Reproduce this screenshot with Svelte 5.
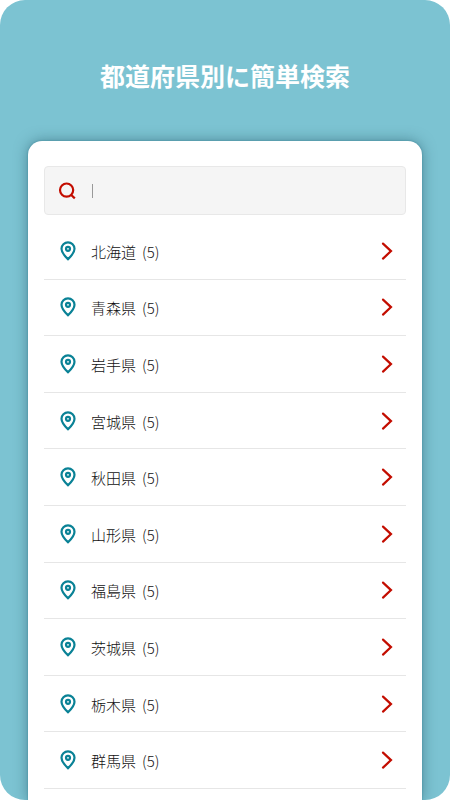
<script>
  const prefectures = [
    { name: '北海道', count: 5 },
    { name: '青森県', count: 5 },
    { name: '岩手県', count: 5 },
    { name: '宮城県', count: 5 },
    { name: '秋田県', count: 5 },
    { name: '山形県', count: 5 },
    { name: '福島県', count: 5 },
    { name: '茨城県', count: 5 },
    { name: '栃木県', count: 5 },
    { name: '群馬県', count: 5 },
  ];

  let query = $state('');
  const shown = $derived(prefectures.filter((p) => p.name.includes(query.trim())));
</script>

<main class="screen">
  <h1>都道府県別に簡単検索</h1>

  <section class="card">
    <label class="search">
      <svg class="icon" viewBox="0 0 20 20" aria-hidden="true">
        <circle cx="9.6" cy="9.1" r="6.6" />
        <path d="M14 13.8 17.8 17.4" />
      </svg>
      {#if !query}<span class="caret"></span>{/if}
      <input type="text" aria-label="都道府県" bind:value={query} />
    </label>

    <ul class="list">
      {#each shown as p (p.name)}
        <li>
          <a href="#{p.name}">
            <svg class="icon pin" viewBox="0 0 20 20" aria-hidden="true">
              <path d="M10 18.2C7.6 15.9 3.5 12 3.5 7.7a6.5 6.3 0 0 1 13 0C16.5 12 12.4 15.9 10 18.2Z" />
              <circle cx="10" cy="7.8" r="2" />
            </svg>
            <span class="label"><span>{p.name}</span><span>({p.count})</span></span>
            <svg class="icon arrow" viewBox="0 0 20 20" aria-hidden="true">
              <path d="M6 2.6 14 10.1 6 17.6" />
            </svg>
          </a>
        </li>
      {/each}
    </ul>
  </section>
</main>

<style>
  :global(body) {
    margin: 0;
    background: #fff;
  }

  .screen {
    box-sizing: border-box;
    height: 100vh;
    padding: 0 28px;
    display: flex;
    flex-direction: column;
    overflow: hidden;
    border-radius: 25px;
    background: #7cc3d2;
    font-family: 'Noto Sans CJK JP', 'Noto Sans', sans-serif;
  }

  h1 {
    margin: 0;
    padding: 55px 0 46px;
    color: #fff;
    font-size: 25px;
    font-weight: 700;
    line-height: 40px;
    text-align: center;
  }

  .card {
    flex: 1 0 auto;
    padding: 25px 16px 12px;
    border-radius: 14px 14px 0 0;
    background: #fff;
    box-shadow:
      0 0 2px #3f8ca0,
      0 0 14px rgba(30, 75, 90, 0.5);
  }

  .search {
    box-sizing: border-box;
    height: 49px;
    padding: 0 12px;
    display: flex;
    align-items: center;
    border: 1px solid #e8e8e8;
    border-radius: 4px;
    background: #f5f5f5;
  }

  .icon {
    flex: none;
    width: 20px;
    height: 20px;
    fill: none;
    stroke: #c30d00;
    stroke-width: 2.2;
  }

  .caret {
    width: 1px;
    height: 14px;
    margin-left: 15px;
    background: #999;
  }

  input {
    flex: 1;
    min-width: 0;
    margin-left: 14px;
    padding: 0;
    border: 0;
    outline: 0;
    background: transparent;
    color: #333;
    font: inherit;
    font-size: 15px;
  }

  .list {
    min-height: 566px;
    margin: 8px 0 0;
    padding: 0;
    display: grid;
    grid-template-rows: repeat(10, 1fr);
    list-style: none;
  }

  li {
    display: flex;
    border-bottom: 1px solid #e6e6e6;
  }

  a {
    flex: 1;
    padding: 0 9px 0 14px;
    display: flex;
    align-items: center;
    color: #111;
    text-decoration: none;
  }

  .pin {
    stroke: #0a8296;
  }

  .arrow {
    stroke-linecap: round;
  }

  .label {
    flex: 1;
    margin-left: 13px;
    padding-top: 2px;
    display: flex;
    gap: 6px;
    font-size: 15px;
    font-weight: 300;
    line-height: 22px;
  }
</style>
